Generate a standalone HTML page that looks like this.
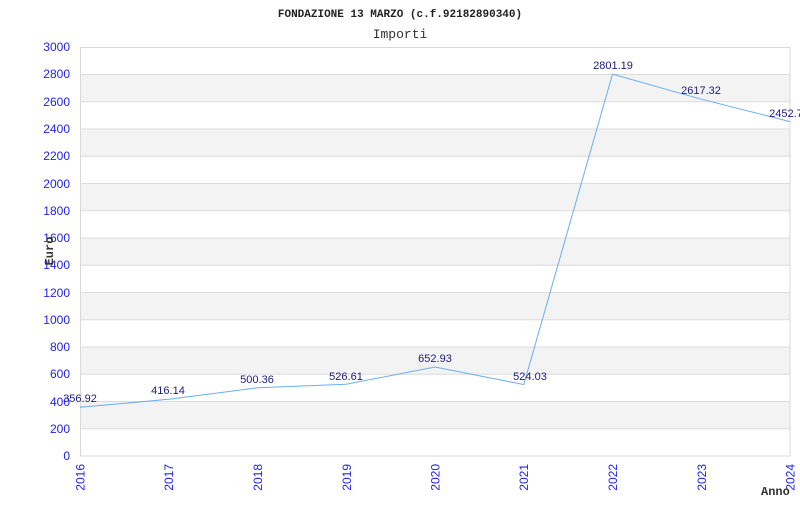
<!DOCTYPE html>
<html><head><meta charset="utf-8"><style>body{margin:0;background:#fff}</style></head><body>
<svg width="800" height="500" xmlns="http://www.w3.org/2000/svg">
<rect width="800" height="500" fill="#fff"/>
<g fill="#f3f3f3">
<rect x="80" y="401.5" width="710" height="27.3"/>
<rect x="80" y="347" width="710" height="27.3"/>
<rect x="80" y="292.5" width="710" height="27.3"/>
<rect x="80" y="238" width="710" height="27.3"/>
<rect x="80" y="183.5" width="710" height="27.3"/>
<rect x="80" y="129" width="710" height="27.3"/>
<rect x="80" y="74.5" width="710" height="27.3"/>
</g>
<g stroke="#dcdcdc" stroke-width="1">
<line x1="80" x2="790" y1="74.5" y2="74.5"/><line x1="80" x2="790" y1="101.8" y2="101.8"/>
<line x1="80" x2="790" y1="129" y2="129"/><line x1="80" x2="790" y1="156.3" y2="156.3"/>
<line x1="80" x2="790" y1="183.5" y2="183.5"/><line x1="80" x2="790" y1="210.8" y2="210.8"/>
<line x1="80" x2="790" y1="238" y2="238"/><line x1="80" x2="790" y1="265.3" y2="265.3"/>
<line x1="80" x2="790" y1="292.5" y2="292.5"/><line x1="80" x2="790" y1="319.8" y2="319.8"/>
<line x1="80" x2="790" y1="347" y2="347"/><line x1="80" x2="790" y1="374.3" y2="374.3"/>
<line x1="80" x2="790" y1="401.5" y2="401.5"/><line x1="80" x2="790" y1="428.8" y2="428.8"/>
<rect x="80.5" y="47.5" width="709.5" height="408.5" fill="none" stroke="#d8d8d8"/>
</g>
<polyline fill="none" stroke="#6aaef0" stroke-width="1" points="80,407.3 168.75,399.3 257.5,387.8 346.25,384.2 435,367 523.75,384.6 612.5,74.1 701.25,99.2 790,121.6"/>
<g font-family="Liberation Sans, sans-serif" font-size="11" fill="#1a1a80" text-anchor="middle">
<text x="80" y="402">356.92</text><text x="168" y="394">416.14</text><text x="257" y="383">500.36</text>
<text x="346" y="380">526.61</text><text x="435" y="362">652.93</text><text x="530" y="380">524.03</text>
<text x="613" y="69">2801.19</text><text x="701" y="94">2617.32</text><text x="786" y="117">2452.7</text>
</g>
<g font-family="Liberation Sans, sans-serif" font-size="12" fill="#2222ee" text-anchor="end">
<text x="70" y="51">3000</text><text x="70" y="78">2800</text><text x="70" y="106">2600</text>
<text x="70" y="133">2400</text><text x="70" y="160">2200</text><text x="70" y="188">2000</text>
<text x="70" y="215">1800</text><text x="70" y="242">1600</text><text x="70" y="269">1400</text>
<text x="70" y="297">1200</text><text x="70" y="324">1000</text><text x="70" y="351">800</text>
<text x="70" y="378">600</text><text x="70" y="406">400</text><text x="70" y="433">200</text>
<text x="70" y="460">0</text>
</g>
<g font-family="Liberation Sans, sans-serif" font-size="12" fill="#2222ee" text-anchor="end">
<text transform="translate(84.5,464) rotate(-90)">2016</text>
<text transform="translate(173,464) rotate(-90)">2017</text>
<text transform="translate(262,464) rotate(-90)">2018</text>
<text transform="translate(351,464) rotate(-90)">2019</text>
<text transform="translate(439.5,464) rotate(-90)">2020</text>
<text transform="translate(528,464) rotate(-90)">2021</text>
<text transform="translate(617,464) rotate(-90)">2022</text>
<text transform="translate(706,464) rotate(-90)">2023</text>
<text transform="translate(794.5,464) rotate(-90)">2024</text>
</g>
<text x="400" y="17" font-family="Liberation Mono, monospace" font-size="11" font-weight="bold" fill="#222" text-anchor="middle">FONDAZIONE 13 MARZO (c.f.92182890340)</text>
<text x="400" y="38" font-family="Liberation Mono, monospace" font-size="13" fill="#333" text-anchor="middle">Importi</text>
<text transform="translate(53,251) rotate(-90)" font-family="Liberation Mono, monospace" font-size="12" font-weight="bold" fill="#333" text-anchor="middle">Euro</text>
<text x="761" y="495" font-family="Liberation Mono, monospace" font-size="12" font-weight="bold" fill="#333">Anno</text>
</svg>
</body></html>
